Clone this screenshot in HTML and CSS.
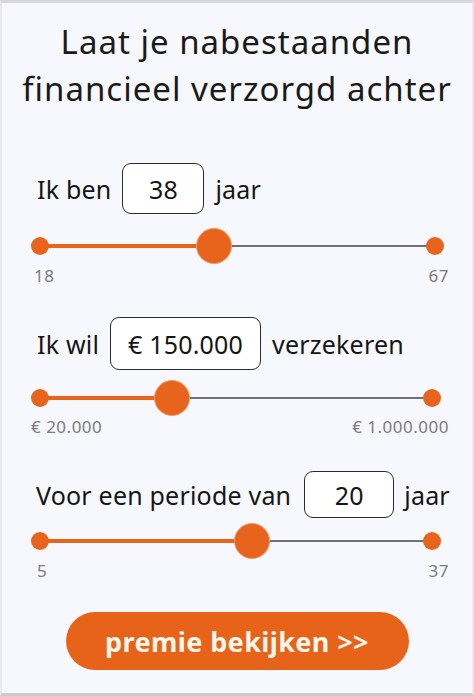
FILE: index.html
```html
<!doctype html>
<html>
    <head>
        <title>Premie berekenen</title>
        <link rel="stylesheet" href="styles.css">
    </head>
    <body>
        <main class="frame">
            <h1>Laat je nabestaanden financieel verzorgd achter</h1>

            <section class="field field-age">
                <div class="row">
                    <span>Ik ben</span>
                    <div class="box box-age">38</div>
                    <span>jaar</span>
                </div>
                <div class="slider">
                    <span class="dot"></span>
                    <span class="fill" style="flex-grow: 150"></span>
                    <span class="thumb"></span>
                    <span class="rest" style="flex-grow: 196"></span>
                    <span class="dot"></span>
                </div>
                <div class="limits">
                    <span>18</span>
                    <span>67</span>
                </div>
            </section>

            <section class="field field-amount">
                <div class="row">
                    <span>Ik wil</span>
                    <div class="box box-amount">€ 150.000</div>
                    <span>verzekeren</span>
                </div>
                <div class="slider">
                    <span class="dot"></span>
                    <span class="fill" style="flex-grow: 107"></span>
                    <span class="thumb"></span>
                    <span class="rest" style="flex-grow: 233"></span>
                    <span class="dot"></span>
                </div>
                <div class="limits">
                    <span>€ 20.000</span>
                    <span>€ 1.000.000</span>
                </div>
            </section>

            <section class="field field-term">
                <div class="row">
                    <span>Voor een periode van</span>
                    <div class="box box-term">20</div>
                    <span>jaar</span>
                </div>
                <div class="slider">
                    <span class="dot"></span>
                    <span class="fill" style="flex-grow: 186"></span>
                    <span class="thumb"></span>
                    <span class="rest" style="flex-grow: 155"></span>
                    <span class="dot"></span>
                </div>
                <div class="limits">
                    <span>5</span>
                    <span>37</span>
                </div>
            </section>

            <div class="actions">
                <button>premie bekijken &gt;&gt;</button>
            </div>
        </main>
    </body>
</html>
```

FILE: styles.css
```css
* {
    box-sizing: border-box;
}

body {
    margin: 0;
    font-family: "Noto Sans", sans-serif;
    color: #151515;
    background: #d9d9de;
}

.frame {
    height: 696px;
    margin: 0;
    padding-top: 15px;
    border-top: 3px solid #d6d6db;
    border-left: 2px solid #e8e8ee;
    border-right: 2px solid #e8e8ee;
    border-bottom: 3px solid #c9c9cf;
    background: #f7f8fd;
}

h1 {
    margin: 0 auto;
    width: 466px;
    font-size: 33px;
    font-weight: 400;
    letter-spacing: 1px;
    line-height: 47px;
    text-align: center;
    color: #1a1a1a;
}

.field {
    padding: 0 28px 0 29px;
}

.row {
    display: flex;
    align-items: center;
    gap: 11px;
    padding-left: 6px;
    font-size: 25px;
    letter-spacing: 0.2px;
    line-height: 32px;
    white-space: nowrap;
}

.row span {
    flex-shrink: 0;
}

.box {
    display: flex;
    align-items: center;
    justify-content: center;
    flex-shrink: 0;
    height: 51px;
    background: white;
    border: 1px solid #2b2b2b;
    border-radius: 9px;
}

.box-age {
    width: 82px;
}

.box-amount {
    width: 151px;
    height: 53px;
}

.box-term {
    width: 90px;
    height: 47px;
}

.slider {
    display: flex;
    align-items: center;
    height: 36px;
}

.dot {
    width: 18px;
    height: 18px;
    flex-shrink: 0;
    border-radius: 50%;
    background: #e8641c;
}

.fill {
    height: 4px;
    margin: 0 -2px;
    background: #e8641c;
}

.rest {
    height: 2px;
    margin: 0 -2px;
    background: #6f717a;
}

.thumb {
    position: relative;
    z-index: 1;
    width: 36px;
    height: 36px;
    flex-shrink: 0;
    border-radius: 50%;
    background: #e8641c;
    border: 1px solid #f09a62;
}

.limits {
    display: flex;
    justify-content: space-between;
    margin-right: -5px;
    font-size: 17px;
    letter-spacing: 0.5px;
    line-height: 20px;
    color: #7b7b80;
}

.field-age {
    margin-top: 51px;
}

.field-age .slider {
    margin-top: 14px;
}

.field-age .limits {
    margin-top: 2px;
    padding-left: 3px;
}

.field-amount {
    margin-top: 31px;
}

.field-amount .slider {
    margin-top: 10px;
    padding-right: 3px;
}

.field-amount .limits {
    margin-top: 1px;
}

.field-term {
    margin-top: 34px;
}

.field-term .row {
    gap: 10px;
    padding-left: 5px;
}

.field-term .row .box {
    margin-left: 3px;
}

.field-term .slider {
    margin-top: 5px;
    padding-right: 3px;
}

.field-term .limits {
    margin-top: 2px;
    padding-left: 6px;
}

.actions {
    display: flex;
    justify-content: center;
    margin-top: 31px;
}

button {
    width: 343px;
    height: 58px;
    border: none;
    border-radius: 29px;
    background: #e8631a;
    color: #fff8ea;
    font-family: "Noto Sans", sans-serif;
    font-size: 27px;
    font-weight: 700;
    letter-spacing: 0.4px;
    cursor: pointer;
}
```
